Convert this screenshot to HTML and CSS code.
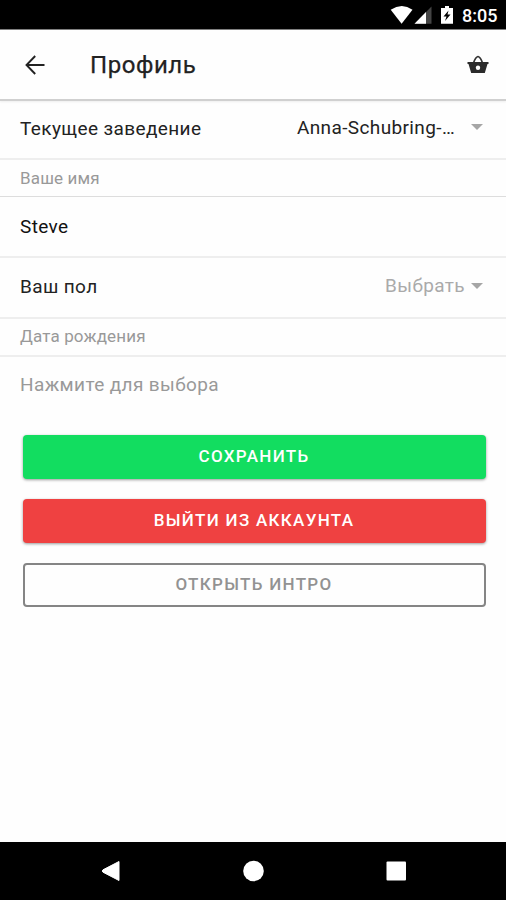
FILE: index.html
```html
<!DOCTYPE html>
<html lang="ru">
<head>
<meta charset="utf-8">
<title>Профиль</title>
<link rel="stylesheet" href="styles.css">
</head>
<body>
<div class="status">
  <svg class="signals" width="66" height="30" viewBox="0 0 66 30" fill="#fff">
    <path d="M0.700 9.700Q12 2.500 22.500 9.700L11.600 23.700Z"/>
    <path d="M41.500 6.500V23.700H24.500Z" fill="#444"/>
    <path d="M36 12V23.700H24.500Z"/>
    <path fill-rule="evenodd" d="M55 6H59V8H63V23.700H51V8H55ZM58.500 10.500L53.500 16.500H56.500L55 21L60.500 14.500H57.500Z"/>
  </svg>
  <span class="clock">8:05</span>
</div>
<header class="toolbar">
  <svg class="back" width="20" height="20" viewBox="0 0 20 20" fill="none" stroke="#222" stroke-width="1.900"><path d="M19.500 10H1.500M10.200 1L1.500 10L10.200 19"/></svg>
  <h1 class="title">Профиль</h1>
  <svg class="basket" width="22" height="19" viewBox="0 0 22 19"><path d="M6.500 8Q8.500 2 11 1.500Q13.500 2 15.500 8" fill="none" stroke="#333" stroke-width="1.700"/><path d="M.5 7H21.500V9H20.500L17.800 18H4.200L1.500 9H.5Z" fill="#2b2b2b"/><circle cx="11" cy="12.800" r="2.200" fill="#fff"/></svg>
</header>
<main class="content">
  <div class="row venue"><span class="venue-label">Текущее заведение</span><span class="choice venue-value">Anna-Schubring-…</span><i class="caret"></i></div>
  <div class="row caption name-caption">Ваше имя</div>
  <div class="row name">Steve</div>
  <div class="row gender"><span class="gender-label">Ваш пол</span><span class="choice gender-value">Выбрать</span><i class="caret"></i></div>
  <div class="row caption birth-caption">Дата рождения</div>
  <div class="row birth">Нажмите для выбора</div>
  <div class="actions">
    <button class="button save">СОХРАНИТЬ</button>
    <button class="button logout">ВЫЙТИ ИЗ АККАУНТА</button>
    <button class="button intro">ОТКРЫТЬ ИНТРО</button>
  </div>
</main>
<nav class="navbar">
  <svg width="506" height="58" viewBox="0 0 506 58" fill="#fff"><path d="M119 19.500V38.500L103 30.200Q101.500 29 103 27.800Z" stroke="#fff"/><circle cx="253.500" cy="29" r="10.300"/><rect x="386.500" y="19.500" width="19.500" height="19" rx="1"/></svg>
</nav>
</body>
</html>
```
FILE: styles.css
```css
* { box-sizing: border-box; }
body {
  margin: 0;
  height: 900px;
  display: flex;
  flex-direction: column;
  background: #fefefe;
  color: #222;
  font-family: Roboto, sans-serif;
  font-size: 19px;
  letter-spacing: .38px;
  overflow: hidden;
}
.status {
  height: 30px;
  background: #000;
  color: #fff;
  display: flex;
  justify-content: flex-end;
  align-items: center;
  padding-right: 9px;
  border-bottom: 1px solid #777;
}
.signals { margin-right: 6px; flex: none; }
.clock { font-size: 18px; font-weight: 500; letter-spacing: 0; width: 35px; white-space: nowrap; padding-top: 2px; }
.toolbar {
  height: 71px;
  display: flex;
  align-items: center;
  padding: 0 17px 0 25px;
  border-bottom: 2px solid #d0d0d0;
  box-shadow: 0 1px 2px #eee;
}
.title { margin: 0 0 0 45px; flex: 1; font-size: 24px; font-weight: 400; letter-spacing: .55px; -webkit-text-stroke: .25px #222; }
.content { flex: 1; }
.row {
  height: 60px;
  display: flex;
  align-items: center;
  padding: 0 23px 0 20px;
  border-bottom: 2px solid #eee;
  white-space: nowrap;
}
.venue { height: 59px; padding-bottom: 2px; }
.venue .caret { margin-bottom: 3px; }
.choice { margin-left: auto; position: relative; top: -1px; }
.venue-value { margin-right: 16px; }
.gender-value { color: #aaa; margin-right: 6px; }
.caret { border: 6px solid transparent; border-top-color: #a6a6a6; border-bottom: 0; }
.caption { height: 38px; font-size: 17px; letter-spacing: .15px; color: #999; }
.name-caption { height: 37px; border-bottom: 1px solid #ddd; }
.name { height: 61px; color: #111; }
.gender { height: 61px; padding-bottom: 2px; }
.gender .caret { margin-bottom: 1px; }
.birth-caption { padding-bottom: 2px; }
.birth { height: 56px; padding-bottom: 1px; color: #999; border: 0; }
.actions { display: flex; flex-direction: column; gap: 20px; padding: 22px 20px 0 23px; }
.button {
  height: 44px;
  border: 0;
  border-radius: 4px;
  color: #fff;
  font: 500 17px Roboto, sans-serif;
  letter-spacing: 1.3px;
  padding: 0 1px 2px 0;
  box-shadow: 0 1px 3px rgba(0, 0, 0, .4);
}
.save { background: #12dd60; }
.logout { background: #ef4141; }
.intro { background: transparent; color: #929292; border: 2px solid #858585; box-shadow: none; }
.navbar { height: 58px; background: #000; flex: none; }
.navbar svg { display: block; }
```
